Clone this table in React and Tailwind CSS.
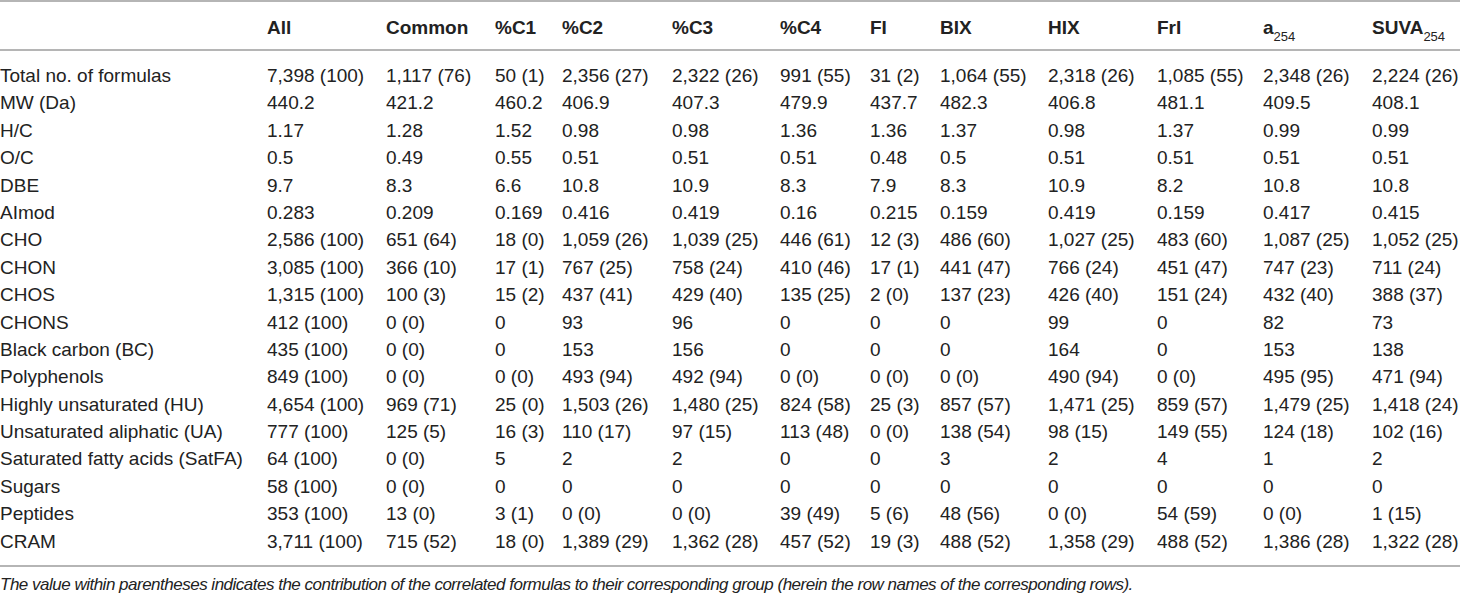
import React from "react";

const cols = "grid grid-cols-[267px_119px_109px_67px_110px_108px_90px_70px_108px_109px_106px_109px_88px]";

const rows = [
  ["Total no. of formulas", "7,398 (100)", "1,117 (76)", "50 (1)", "2,356 (27)", "2,322 (26)", "991 (55)", "31 (2)", "1,064 (55)", "2,318 (26)", "1,085 (55)", "2,348 (26)", "2,224 (26)"],
  ["MW (Da)", "440.2", "421.2", "460.2", "406.9", "407.3", "479.9", "437.7", "482.3", "406.8", "481.1", "409.5", "408.1"],
  ["H/C", "1.17", "1.28", "1.52", "0.98", "0.98", "1.36", "1.36", "1.37", "0.98", "1.37", "0.99", "0.99"],
  ["O/C", "0.5", "0.49", "0.55", "0.51", "0.51", "0.51", "0.48", "0.5", "0.51", "0.51", "0.51", "0.51"],
  ["DBE", "9.7", "8.3", "6.6", "10.8", "10.9", "8.3", "7.9", "8.3", "10.9", "8.2", "10.8", "10.8"],
  ["AImod", "0.283", "0.209", "0.169", "0.416", "0.419", "0.16", "0.215", "0.159", "0.419", "0.159", "0.417", "0.415"],
  ["CHO", "2,586 (100)", "651 (64)", "18 (0)", "1,059 (26)", "1,039 (25)", "446 (61)", "12 (3)", "486 (60)", "1,027 (25)", "483 (60)", "1,087 (25)", "1,052 (25)"],
  ["CHON", "3,085 (100)", "366 (10)", "17 (1)", "767 (25)", "758 (24)", "410 (46)", "17 (1)", "441 (47)", "766 (24)", "451 (47)", "747 (23)", "711 (24)"],
  ["CHOS", "1,315 (100)", "100 (3)", "15 (2)", "437 (41)", "429 (40)", "135 (25)", "2 (0)", "137 (23)", "426 (40)", "151 (24)", "432 (40)", "388 (37)"],
  ["CHONS", "412 (100)", "0 (0)", "0", "93", "96", "0", "0", "0", "99", "0", "82", "73"],
  ["Black carbon (BC)", "435 (100)", "0 (0)", "0", "153", "156", "0", "0", "0", "164", "0", "153", "138"],
  ["Polyphenols", "849 (100)", "0 (0)", "0 (0)", "493 (94)", "492 (94)", "0 (0)", "0 (0)", "0 (0)", "490 (94)", "0 (0)", "495 (95)", "471 (94)"],
  ["Highly unsaturated (HU)", "4,654 (100)", "969 (71)", "25 (0)", "1,503 (26)", "1,480 (25)", "824 (58)", "25 (3)", "857 (57)", "1,471 (25)", "859 (57)", "1,479 (25)", "1,418 (24)"],
  ["Unsaturated aliphatic (UA)", "777 (100)", "125 (5)", "16 (3)", "110 (17)", "97 (15)", "113 (48)", "0 (0)", "138 (54)", "98 (15)", "149 (55)", "124 (18)", "102 (16)"],
  ["Saturated fatty acids (SatFA)", "64 (100)", "0 (0)", "5", "2", "2", "0", "0", "3", "2", "4", "1", "2"],
  ["Sugars", "58 (100)", "0 (0)", "0", "0", "0", "0", "0", "0", "0", "0", "0", "0"],
  ["Peptides", "353 (100)", "13 (0)", "3 (1)", "0 (0)", "0 (0)", "39 (49)", "5 (6)", "48 (56)", "0 (0)", "54 (59)", "0 (0)", "1 (15)"],
  ["CRAM", "3,711 (100)", "715 (52)", "18 (0)", "1,389 (29)", "1,362 (28)", "457 (52)", "19 (3)", "488 (52)", "1,358 (29)", "488 (52)", "1,386 (28)", "1,322 (28)"],
];

const heads = ["", "All", "Common", "%C1", "%C2", "%C3", "%C4", "FI", "BIX", "HIX", "FrI"];

export default function App() {
  return (
    <div
      className="w-[1460px] h-[596px] bg-white text-[#222] overflow-hidden"
      style={{ fontFamily: '"Liberation Sans", Arial, sans-serif' }}
    >
      <div className="border-t-2 border-[#b5b5b5]" />
      <div className={`${cols} pt-[12px] pb-[8px] leading-[27px] text-[19px] font-bold border-b-2 border-[#b5b5b5]`}>
        {heads.map((h, i) => (
          <div key={i} className="whitespace-nowrap">{h}</div>
        ))}
        <div className="whitespace-nowrap">
          a<sub className="text-[13px] font-normal align-[-4px] leading-none">254</sub>
        </div>
        <div className="whitespace-nowrap">
          SUVA<sub className="text-[13px] font-normal align-[-4px] leading-none">254</sub>
        </div>
      </div>
      <div className="pt-[11px] pb-[10px] border-b-2 border-[#b5b5b5] text-[19px]">
        {rows.map((r, i) => (
          <div key={i} className={`${cols} h-[27.4px] leading-[27.4px]`}>
            {r.map((c, j) => (
              <div key={j} className="whitespace-nowrap">{c}</div>
            ))}
          </div>
        ))}
      </div>
      <div className="mt-[8px] italic text-[17px] tracking-[-0.5px] leading-[20px] whitespace-nowrap">
        The value within parentheses indicates the contribution of the correlated formulas to their corresponding group (herein the row names of the corresponding rows).
      </div>
    </div>
  );
}
